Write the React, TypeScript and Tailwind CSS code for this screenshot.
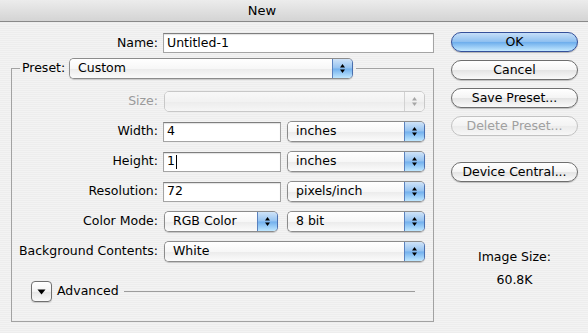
import React from "react";

function Arrows({ color }: { color: string }) {
  return (
    <svg width="7" height="11" viewBox="0 0 7 11">
      <path d="M3.5 1 L6 4.5 L1 4.5 Z" fill={color} />
      <path d="M1 6.5 L6 6.5 L3.5 10 Z" fill={color} />
    </svg>
  );
}

function Popup({
  value = "",
  className = "",
  disabled = false,
}: {
  value?: string;
  className?: string;
  disabled?: boolean;
}) {
  return (
    <div
      className={`flex h-[21px] overflow-hidden rounded-[5px] border ${
        disabled
          ? "border-[#c8c8c8]"
          : "border-[#8c8c8c] border-r-[#4a6fae] shadow-[0_1px_1px_rgba(0,0,0,0.18)]"
      } ${className}`}
    >
      <div
        className={`flex flex-1 items-center pl-[8px] ${
          disabled
            ? "bg-[linear-gradient(to_bottom,#f8f8f8_0%,#f2f2f2_50%,#ececec_51%,#f6f6f6_100%)]"
            : "bg-[linear-gradient(to_bottom,#ffffff_0%,#f7f7f7_50%,#ebebeb_51%,#fbfbfb_100%)]"
        }`}
      >
        {value}
      </div>
      <div
        className={`flex w-[20px] items-center justify-center border-l ${
          disabled
            ? "border-[#d2d2d2] bg-[linear-gradient(to_bottom,#f8f8f8_0%,#f0f0f0_50%,#e9e9e9_51%,#f5f5f5_100%)]"
            : "border-[#5a82bf] bg-[linear-gradient(to_bottom,#cfe3f8_0%,#95c3f1_48%,#72b0ed_52%,#bfe7ff_100%)]"
        }`}
      >
        <Arrows color={disabled ? "#a6a6a6" : "#000000"} />
      </div>
    </div>
  );
}

function TextBox({ children, className = "" }: { children: React.ReactNode; className?: string }) {
  return (
    <div
      className={`flex h-[20px] items-center border border-[#a4a4a4] border-t-[#7e7e7e] bg-white pl-[3px] shadow-[inset_0_1px_1px_rgba(0,0,0,0.12)] ${className}`}
    >
      {children}
    </div>
  );
}

function Button({
  label,
  kind = "normal",
}: {
  label: string;
  kind?: "normal" | "default" | "disabled";
}) {
  const styles = {
    normal:
      "border-[#6e6e6e] text-black bg-[linear-gradient(to_bottom,#ffffff_0%,#f4f4f4_50%,#e4e4e4_51%,#fafafa_100%)] shadow-[0_1px_1px_rgba(0,0,0,0.2)]",
    default:
      "border-[#34509a] text-black bg-[linear-gradient(to_bottom,#c6dff8_0%,#8fc0f0_48%,#6eaeec_52%,#c2e8ff_100%)] shadow-[0_1px_1px_rgba(0,0,0,0.25)]",
    disabled:
      "border-[#c2c2c2] text-[#a0a0a0] bg-[linear-gradient(to_bottom,#fafafa_0%,#f3f3f3_50%,#ebebeb_51%,#f7f7f7_100%)]",
  };
  return (
    <div
      className={`flex h-[20px] w-[127px] items-center justify-center rounded-full border ${styles[kind]}`}
    >
      {label}
    </div>
  );
}

export default function App() {
  return (
    <div className="flex h-[333px] w-[588px] flex-col overflow-hidden bg-[repeating-linear-gradient(to_bottom,#ededed_0px,#ededed_1px,#f3f3f3_1px,#f3f3f3_2px)] font-['DejaVu_Sans',sans-serif] text-[12.5px] text-black">
      {/* title bar */}
      <div className="flex h-[22px] items-center justify-center border-b border-[#8a8a8a] bg-[linear-gradient(to_bottom,#ececec_0%,#e0e0e0_50%,#d4d4d4_100%)] pr-[64px] text-[13px]">
        New
      </div>

      <div className="flex">
        {/* left side */}
        <div className="w-[434px] pl-[11px] pt-[11px]">
          <div className="flex h-[20px] items-center">
            <div className="w-[147px] text-right">Name:</div>
            <TextBox className="ml-[5px] w-[271px]">Untitled-1</TextBox>
          </div>

          <fieldset className="mt-[5px] w-[423px] border border-[#a2a2a2] pb-[19px] pt-[12px]">
            <legend className="ml-[8px] flex items-center pl-[2px] pr-[3px]">
              <span className="w-[47px]">Preset:</span>
              <Popup value="Custom" className="w-[284px]" />
            </legend>

            <div className="grid grid-cols-[146px_1fr] items-center gap-x-[5px] gap-y-[9px]">
              <div className="text-right text-[#9a9a9a]">Size:</div>
              <Popup disabled className="ml-px w-[261px]" />

              <div className="text-right">Width:</div>
              <div className="flex h-[21px] items-center">
                <TextBox className="w-[118px]">4</TextBox>
                <Popup value="inches" className="ml-[6px] w-[138px]" />
              </div>

              <div className="text-right">Height:</div>
              <div className="flex h-[21px] items-center">
                <TextBox className="w-[118px]">
                  1<span className="ml-px h-[14px] w-px bg-black" />
                </TextBox>
                <Popup value="inches" className="ml-[6px] w-[138px]" />
              </div>

              <div className="text-right">Resolution:</div>
              <div className="flex h-[21px] items-center">
                <TextBox className="w-[118px]">72</TextBox>
                <Popup value="pixels/inch" className="ml-[6px] w-[138px]" />
              </div>

              <div className="text-right">Color Mode:</div>
              <div className="flex h-[21px] items-center">
                <Popup value="RGB Color" className="ml-px w-[114px]" />
                <Popup value="8 bit" className="ml-[9px] w-[138px]" />
              </div>

              <div className="text-right">Background Contents:</div>
              <Popup value="White" className="ml-px w-[261px]" />
            </div>

            <div className="mt-[19px] flex h-[21px] items-center pl-[19px] pr-[18px]">
              <div className="flex h-[21px] w-[21px] items-center justify-center rounded-[4px] border border-[#707070] bg-[linear-gradient(to_bottom,#ffffff_0%,#f3f3f3_50%,#e5e5e5_51%,#fafafa_100%)] shadow-[0_1px_1px_rgba(0,0,0,0.15)]">
                <svg width="9" height="6" viewBox="0 0 9 6">
                  <path d="M0.5 0.5 L8.5 0.5 L4.5 5.5 Z" fill="#000" />
                </svg>
              </div>
              <span className="ml-[5px]">Advanced</span>
              <div className="ml-[5px] h-px flex-1 bg-[#9c9c9c]" />
            </div>
          </fieldset>
        </div>

        {/* right side */}
        <div className="ml-[17px] flex w-[127px] flex-col pt-[10px]">
          <div className="flex flex-col gap-[8px]">
            <Button label="OK" kind="default" />
            <Button label="Cancel" />
            <Button label="Save Preset..." />
            <Button label="Delete Preset..." kind="disabled" />
          </div>
          <div className="mt-[26px]">
            <Button label="Device Central..." />
          </div>
          <div className="mt-[67px] text-center leading-[16px]">Image Size:</div>
          <div className="mt-[7px] text-center leading-[16px]">60.8K</div>
        </div>
      </div>
    </div>
  );
}
